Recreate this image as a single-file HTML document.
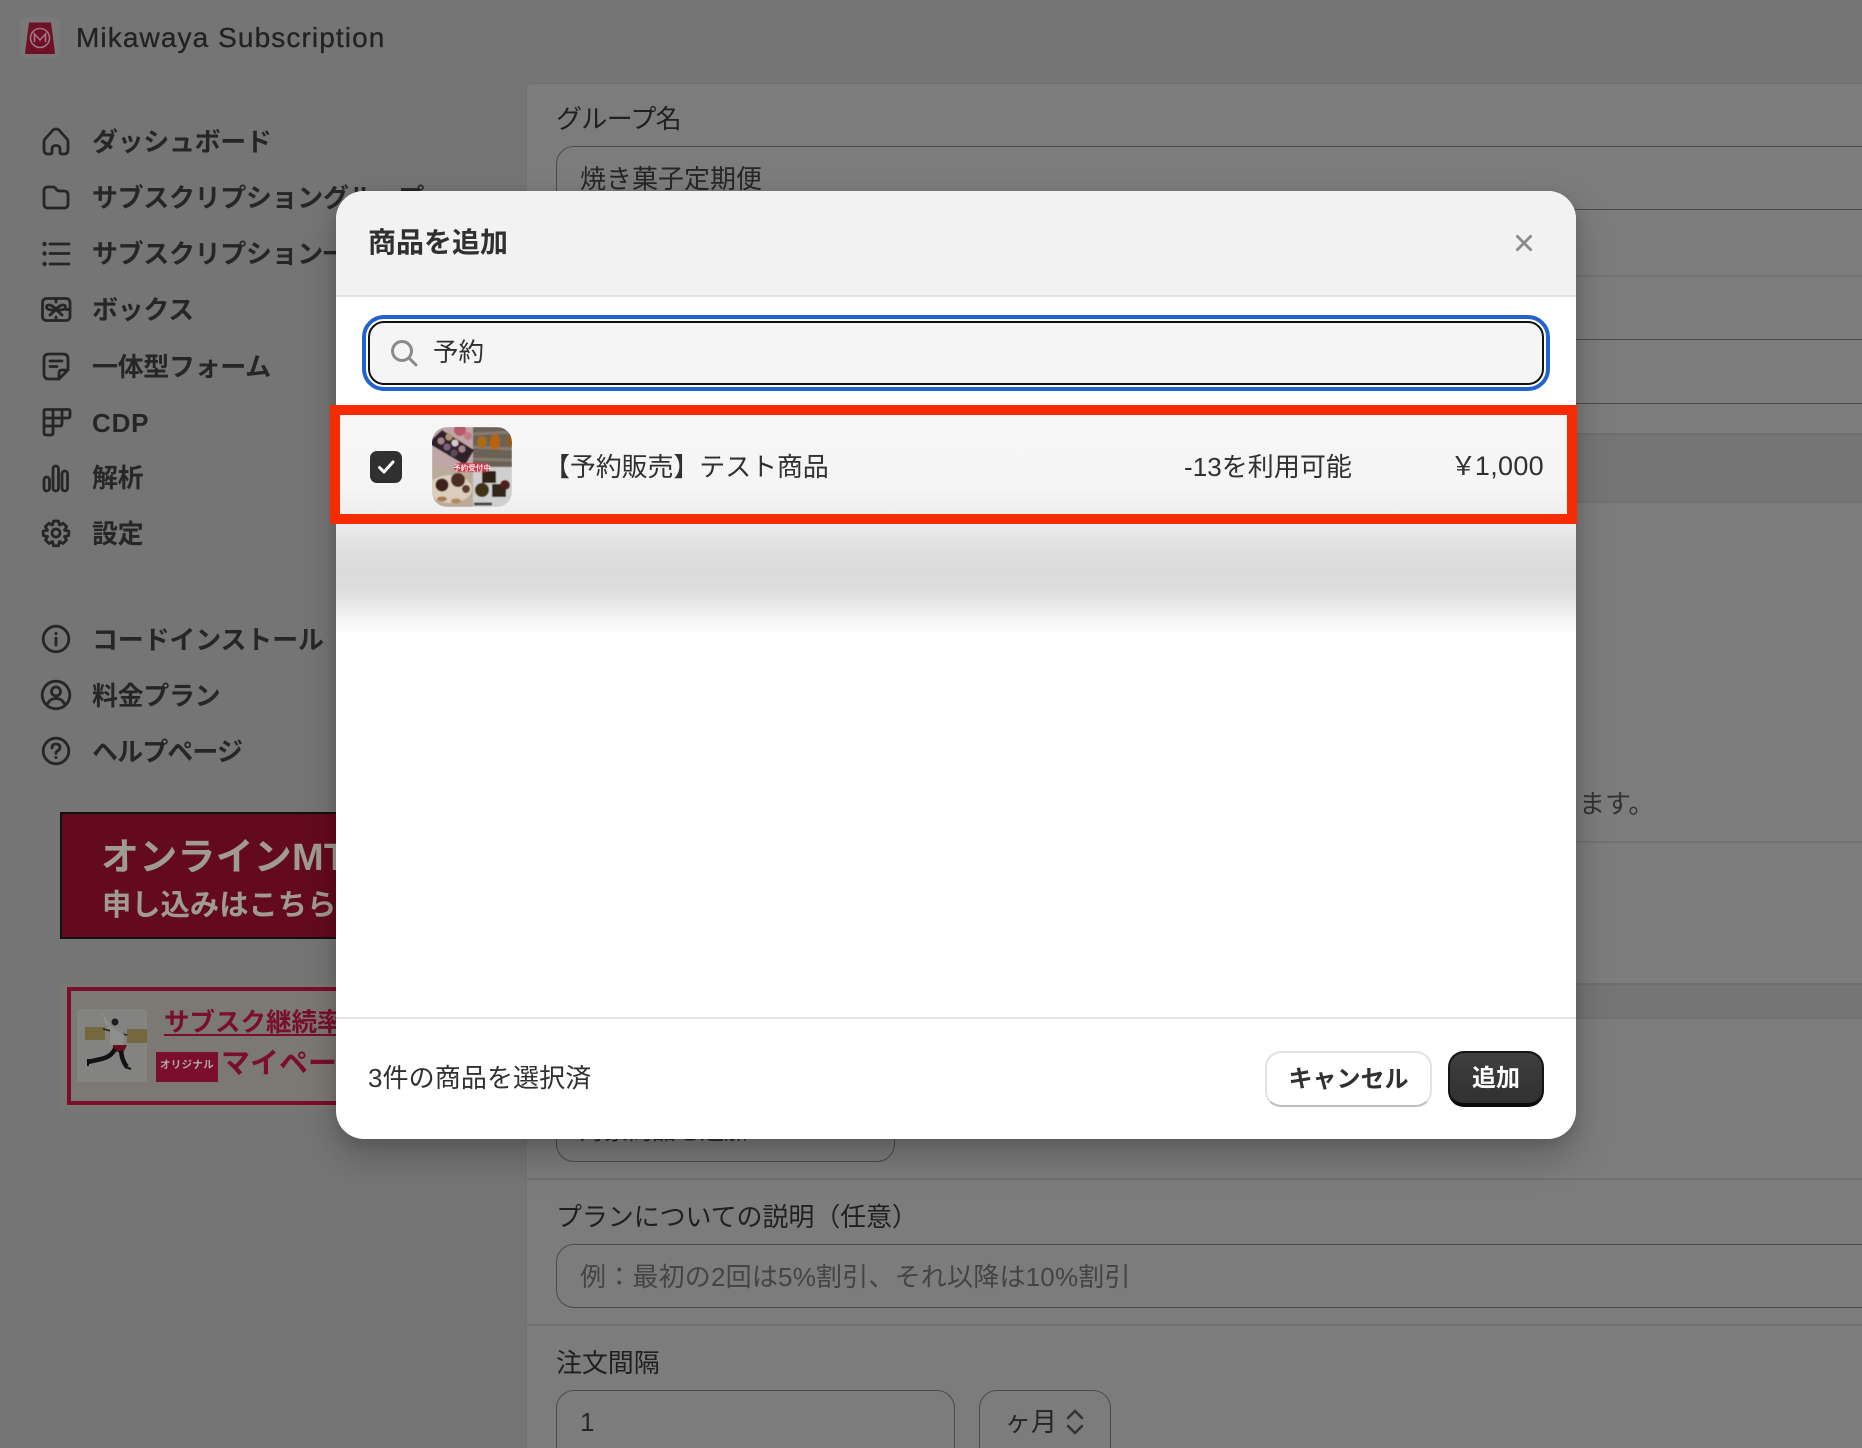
<!DOCTYPE html>
<html lang="ja">
<head>
<meta charset="utf-8">
<title>Mikawaya Subscription</title>
<style>
html,body{margin:0;padding:0;width:1862px;height:1448px;overflow:hidden}
#w{position:relative;width:1862px;height:1448px;overflow:hidden;background:#757575;font-family:"Liberation Sans","Noto Sans CJK JP",sans-serif;color:#202020}
.a{position:absolute}
.t{position:absolute;white-space:nowrap;line-height:1}
.nav{font-size:26px;font-weight:700;color:#262626;left:92px;letter-spacing:-.35px}
.ic{position:absolute;left:42px;width:28px;height:28px;fill:none;stroke:#262626;stroke-width:2.800;stroke-linecap:round;stroke-linejoin:round;overflow:visible}
.lb{font-size:26px;color:#202020;left:556px;letter-spacing:-.7px}
.sf{position:absolute;left:526px;right:0;height:2px;background:#727272}
.inp{position:absolute;box-sizing:border-box;border:1.5px solid #4a4a4a;border-radius:18px}
.card{position:absolute;left:525px;right:0;background:#7c7c7c}
.m{font-size:26px;color:#303030}
</style>
</head>
<body>
<div id="w">
<!-- top bar -->
<div class="a" style="left:20px;top:18px;width:40px;height:40px;background:#797979;border-radius:4px"></div>
<svg class="a" style="left:23px;top:20px" width="34" height="36" viewBox="0 0 34 36">
<path d="M6 2.500H28L32 33Q32 34 30 34H4Q2 34 2 33Z" fill="#701028"/>
<circle cx="17" cy="18" r="9.500" fill="none" stroke="#9e7882" stroke-width="1.600"/>
<path d="M11.500 22V14L17 20L22.500 14V22" fill="none" stroke="#9e7882" stroke-width="1.600"/>
</svg>
<div class="t" style="left:76px;top:24px;font-size:28px;color:#222;letter-spacing:1.1px;-webkit-text-stroke:.3px #222">Mikawaya Subscription</div>

<!-- sidebar -->
<div class="t nav" style="top:129px">ダッシュボード</div>
<div class="t nav" style="top:185px">サブスクリプショングループ</div>
<div class="t nav" style="top:241px">サブスクリプション一覧</div>
<div class="t nav" style="top:297px">ボックス</div>
<div class="t nav" style="top:354px">一体型フォーム</div>
<div class="t nav" style="top:410px;letter-spacing:.8px">CDP</div>
<div class="t nav" style="top:465px">解析</div>
<div class="t nav" style="top:521px">設定</div>
<div class="t nav" style="top:627px;letter-spacing:-.2px">コードインストール</div>
<div class="t nav" style="top:683px">料金プラン</div>
<div class="t nav" style="top:739px;letter-spacing:-.9px">ヘルプページ</div>

<svg class="ic" style="top:127px" viewBox="0 0 28 28"><path d="M3 12L11 3Q14 .8 17 3L25 12Q26 13 26 15V23Q26 27 22 27H19.500Q18 27 18 25V22Q18 18.500 14 18.500Q10 18.500 10 22V25Q10 27 8.500 27H6Q2 27 2 23V15Q2 13 3 12Z"/></svg>
<svg class="ic" style="top:183px" viewBox="0 0 28 28"><path d="M2 8Q2 4 6 4H11Q13 4 14 6L15 7Q16 8 18 8H22Q26 8 26 12V21Q26 25 22 25H6Q2 25 2 21Z"/></svg>
<svg class="ic" style="top:239px" viewBox="0 0 28 28"><path d="M8 5H27M8 14.500H27M8 25H27"/><g fill="#262626" stroke="none"><circle cx="2.500" cy="5" r="2.200"/><circle cx="2.500" cy="14.500" r="2.200"/><circle cx="2.500" cy="25" r="2.200"/></g></svg>
<svg class="ic" style="top:296px" viewBox="0 0 28 28"><rect x="0.500" y="2.500" width="27.500" height="22" rx="4"/><path d="M14 13.500C10 8 4.500 8 4.500 11C4.500 14 10 14.500 14 13.500C18 8 23.500 8 23.500 11C23.500 14 18 14.500 14 13.500ZM14 13.500L8 19M14 13.500L20 19M14 2.500V6M14 21V24.500M24 13.500H28"/></svg>
<svg class="ic" style="top:352px" viewBox="0 0 28 28"><path d="M17 27H7Q2 27 2 22V7Q2 2 7 2H21Q26 2 26 7V18L17 27ZM17 27V21Q17 18 20 18H26M8 9H20M8 14.500H15"/></svg>
<svg class="ic" style="top:408px" viewBox="0 0 28 28"><path d="M2 3Q2 1.500 3.500 1.500H26Q28 1.500 28 3V8Q28 10 26 10H20V15Q20 18 18 18H11V25Q11 27 9 27H4Q2 27 2 25ZM2 10H20M2 18H11M11 1.500V18M20 1.500V10"/></svg>
<svg class="ic" style="top:464px" viewBox="0 0 28 28"><rect x="2" y="13" width="5.500" height="14" rx="2.750"/><rect x="11" y="2" width="5.500" height="25" rx="2.750"/><rect x="20" y="7" width="5.500" height="20" rx="2.750"/></svg>
<svg class="ic" style="top:519px" viewBox="0 0 28 28"><circle cx="14" cy="14" r="4"/><path d="M11.500 2H16.500L17.500 6L21.200 4.200L24.700 7.700L22.500 11.200L26.800 12V16.500L22.500 17.500L24.500 21L21 24.500L17.500 22.400L16.500 26.800H11.500L10.500 22.400L7 24.500L3.500 21L5.500 17.500L1.200 16.500V12L5.500 11.200L3.300 7.700L6.800 4.200L10.500 6Z"/></svg>
<svg class="ic" style="top:625px" viewBox="0 0 28 28"><circle cx="14" cy="14" r="12.800"/><path d="M14 13V20"/><circle cx="14" cy="8.500" r="1.500" fill="#262626" stroke="none"/></svg>
<svg class="ic" style="top:681px" viewBox="0 0 28 28"><circle cx="14" cy="14" r="13.800"/><circle cx="14" cy="10.500" r="4.500"/><path d="M5.500 23Q8 17.500 14 17.500Q20 17.500 22.500 23"/></svg>
<svg class="ic" style="top:737px" viewBox="0 0 28 28"><circle cx="14" cy="14" r="12.800"/><path d="M10 11Q10 7 14 7Q18 7 18 10.500Q18 12.500 16 13.500Q14 14.500 14 16.500"/><circle cx="14" cy="20.500" r="1.500" fill="#262626" stroke="none"/></svg>

<!-- banner 1 -->
<div class="a" style="left:60px;top:812px;width:300px;height:127px;box-sizing:border-box;border:2px solid #111;background:#640a1e"></div>
<div class="t" style="left:101px;top:839px;font-size:38px;font-weight:700;color:#9f9b92;letter-spacing:.2px">オンラインMTG</div>
<div class="t" style="left:102px;top:891px;font-size:29.300px;font-weight:700;color:#9f9b92">申し込みはこちら</div>

<!-- banner 2 -->
<div class="a" style="left:60px;top:983px;width:300px;height:126px;background:#797772"></div>
<div class="a" style="left:67px;top:987px;width:290px;height:118px;box-sizing:border-box;border:4px solid #7a0e2c;background:#7c7974"></div>
<svg class="a" style="left:77px;top:1009px" width="70" height="73" viewBox="0 0 70 73">
<rect width="70" height="73" fill="#838381"/>
<rect x="8" y="18" width="20" height="13" fill="#75683f"/><rect x="50" y="20" width="20" height="14" fill="#75683f"/>
<path d="M26 20L50 26" stroke="#222" stroke-width="1.500"/>
<path d="M25 3Q27 14 33 21L33 36L46 36L47 25L34 18" fill="#8e8e8c"/>
<circle cx="38" cy="13" r="3.500" fill="#1d1d1d"/>
<path d="M36 36H50L46 44L36 42Z" fill="#660d22"/>
<path d="M38 40Q34 48 24 50L11 53M44 42Q45 52 50 58" fill="none" stroke="#111" stroke-width="4.500"/>
<path d="M11 50V57M48 58L54 60" stroke="#111" stroke-width="2"/>
</svg>
<div class="t" style="left:164px;top:1011px;font-size:25.500px;font-weight:700;color:#7a0e2c;text-decoration:underline;text-underline-offset:3px">サブスク継続率を</div>
<div class="a" style="left:156px;top:1052px;width:62px;height:30px;background:#7a0e2c"></div>
<div class="t" style="left:160px;top:1060px;font-size:10.500px;font-weight:700;color:#b0aaa4;letter-spacing:.3px">オリジナル</div>
<div class="t" style="left:221px;top:1050px;font-size:29px;font-weight:700;color:#7a0e2c">マイページ</div>

<!-- main cards -->
<div class="card" style="top:82px;height:352px;border-radius:8px 0 0 0;box-shadow:inset 0 2px 0 #727272,inset 2px 0 0 #737373"></div>
<div class="card" style="top:502px;height:482px;box-shadow:inset 2px 0 0 #737373"></div>
<div class="card" style="top:1018px;height:430px;box-shadow:inset 2px 0 0 #737373"></div>
<div class="a" style="left:526px;right:0;top:433px;height:2px;background:#6f6f6f"></div>
<div class="a" style="left:526px;right:0;top:501px;height:2px;background:#727272"></div>
<div class="a" style="left:526px;right:0;top:983px;height:2px;background:#6f6f6f"></div>
<div class="a" style="left:526px;right:0;top:1017px;height:2px;background:#727272"></div>
<div class="sf" style="top:275px"></div>
<div class="sf" style="top:841px"></div>
<div class="sf" style="top:1178px"></div>
<div class="sf" style="top:1324px"></div>

<div class="t lb" style="top:106px">グループ名</div>
<div class="inp" style="left:556px;top:146px;width:1340px;height:64px"></div>
<div class="t" style="left:580px;top:166px;font-size:26px;color:#262626">焼き菓子定期便</div>
<div class="inp" style="left:556px;top:339px;width:1340px;height:65px"></div>
<div class="t" style="left:1579px;top:791px;font-size:26px;color:#333">ます。</div>

<div class="inp" style="left:556px;top:1100px;width:339px;height:62px"></div>
<div class="t" style="left:580px;top:1120px;font-size:24px;color:#262626">対象商品を追加</div>

<div class="t lb" style="top:1204px;letter-spacing:-.1px">プランについての説明（任意）</div>
<div class="inp" style="left:556px;top:1244px;width:1340px;height:64px"></div>
<div class="t" style="left:580px;top:1264px;font-size:26px;color:#444;letter-spacing:.2px">例：最初の2回は5%割引、それ以降は10%割引</div>
<div class="t lb" style="top:1350px;letter-spacing:-.1px">注文間隔</div>
<div class="inp" style="left:556px;top:1390px;width:399px;height:90px"></div>
<div class="t" style="left:580px;top:1409px;font-size:26px;color:#262626">1</div>
<div class="inp" style="left:979px;top:1390px;width:132px;height:90px"></div>
<div class="t" style="left:1005px;top:1409px;font-size:26px;color:#262626">ヶ月</div>
<svg class="a" style="left:1066px;top:1408px" width="18" height="28" viewBox="0 0 18 28" fill="none" stroke="#333" stroke-width="2.500" stroke-linecap="round" stroke-linejoin="round"><path d="M2 10L9 3L16 10M2 18L9 25L16 18"/></svg>

<!-- modal -->
<div class="a" style="left:336px;top:191px;width:1240px;height:948px;border-radius:28px;background:#fff;overflow:hidden;box-shadow:0 18px 36px rgba(0,0,0,.22),0 4px 14px rgba(0,0,0,.1)">
  <div class="a" style="left:0;top:0;width:1240px;height:104px;background:#f2f2f2"></div>
  <div class="a" style="left:0;top:104px;width:1240px;height:2px;background:#e4e4e4"></div>
  <div class="a" style="left:0;top:333px;width:1240px;height:110px;background:linear-gradient(180deg,#ececec 0,#dfdfdf 22%,#dbdbdb 42%,#dcdcdc 58%,#eeeeee 80%,#fbfbfb 95%,#fff 100%)"></div>
  <div class="a" style="left:0;top:826px;width:1240px;height:2px;background:#e3e3e3"></div>
</div>
<div class="t m" style="left:368px;top:229px;font-size:28px;font-weight:700;color:#303030">商品を追加</div>
<svg class="a" style="left:1515px;top:234px" width="18" height="18" viewBox="0 0 18 18" fill="none" stroke="#8a8a8a" stroke-width="2.800" stroke-linecap="square"><path d="M2.500 2.500L15.500 15.500M15.500 2.500L2.500 15.500"/></svg>

<div class="a" style="left:362px;top:315px;width:1188px;height:76px;box-sizing:border-box;border:4.500px solid #2463c9;border-radius:22px;background:#fff"></div>
<div class="a" style="left:368px;top:321px;width:1176px;height:64px;box-sizing:border-box;border:2px solid #111;border-radius:16px;background:#f5f5f5"></div>
<svg class="a" style="left:390px;top:339px" width="28" height="28" viewBox="0 0 28 28" fill="none" stroke="#8a8a8a" stroke-width="3" stroke-linecap="round"><circle cx="12" cy="12" r="9.500"/><path d="M19 19L26 26"/></svg>
<div class="t m" style="left:433px;top:341px;font-size:25.500px">予約</div>

<div class="a" style="left:330px;top:405px;width:1247px;height:119px;box-sizing:border-box;border:10px solid #f72a00;background:linear-gradient(180deg,#f6f6f6 0,#f5f5f5 70%,#eeeeee 100%)"></div>
<div class="a" style="left:370px;top:451px;width:32px;height:32px;border-radius:7px;background:#303030"></div>
<svg class="a" style="left:370px;top:451px" width="32" height="32" viewBox="0 0 32 32" fill="none" stroke="#fff" stroke-width="3" stroke-linecap="round" stroke-linejoin="round"><path d="M9.500 16.500L14 21L23 11"/></svg>

<svg class="a" style="left:432px;top:427px;border-radius:15px" width="80" height="80" viewBox="0 0 80 80">
<defs><clipPath id="c"><rect width="80" height="80" rx="15"/></clipPath><filter id="b"><feGaussianBlur stdDeviation=".5"/></filter></defs>
<g clip-path="url(#c)"><g filter="url(#b)">
<rect width="41" height="40" fill="#c0a6a8"/>
<rect x="41" width="39" height="40" fill="#6b6256"/>
<path d="M41 7L80 5M41 20L80 22M41 32L80 33" stroke="#857c6e" stroke-width="3"/>
<rect y="40" width="41" height="40" fill="#b9aa9a"/>
<rect x="41" y="40" width="39" height="40" fill="#cfcfcf"/>
<circle cx="28" cy="3" r="6" fill="#b95a68"/><circle cx="36" cy="9" r="4" fill="#c47a84"/>
<path d="M-4 16L10 3L42 23L33 38Z" fill="#2f2229"/>
<g fill="#a78389"><circle cx="9" cy="14" r="3.500"/><circle cx="17" cy="10" r="3.500" fill="#b6926f"/><circle cx="15" cy="20" r="3.500" fill="#7d6180"/><circle cx="23" cy="16" r="3.500" fill="#d6c8ca"/><circle cx="22" cy="26" r="3.500" fill="#61495c"/><circle cx="30" cy="22" r="3.500"/></g>
<ellipse cx="50" cy="15" rx="5" ry="6" fill="#a86d16"/><ellipse cx="63" cy="15" rx="5" ry="8" fill="#bb6210"/><ellipse cx="78" cy="14" rx="3" ry="6" fill="#945d15"/>
<ellipse cx="18" cy="62" rx="22" ry="14" fill="#dccdbc"/>
<circle cx="10" cy="58" r="6.500" fill="#3e241b"/><circle cx="26" cy="53" r="7" fill="#4c2e22"/><circle cx="34" cy="62" r="4" fill="#5b3a2b"/><ellipse cx="10" cy="72" rx="5" ry="2.500" fill="#a87a52"/><ellipse cx="24" cy="74" rx="5" ry="2.500" fill="#b38961"/>
<rect x="50" y="44" width="14" height="12" fill="#2d2319"/><rect x="60" y="57" width="14" height="13" fill="#33271a"/><circle cx="50" cy="63" r="7" fill="#3f3215"/><circle cx="73" cy="58" r="5" fill="#521a1e"/><path d="M42 77H60" stroke="#444" stroke-width="3"/>
<rect x="22" y="36" width="36" height="9" rx="4.500" fill="#c93644"/>
</g></g>
<text x="40" y="43.500" text-anchor="middle" font-size="7.500" font-weight="700" fill="#f4e6e6" font-family="'Liberation Sans','Noto Sans CJK JP',sans-serif">予約受付中</text>
</svg>

<div class="t m" style="left:544px;top:454px;font-size:26px;letter-spacing:-.12px">【予約販売】テスト商品</div>
<div class="t m" style="left:1184px;top:454px;font-size:26px;letter-spacing:.05px">-13を利用可能</div>
<div class="t m" style="right:318px;top:453px;font-size:27px;letter-spacing:.3px"><span style="font-size:26px;letter-spacing:-1.5px">￥</span>1,000</div>

<div class="t m" style="left:368px;top:1065px;font-size:26px;letter-spacing:.1px">3件の商品を選択済</div>
<div class="a" style="left:1265px;top:1051px;width:167px;height:56px;box-sizing:border-box;border:2px solid #e2e2e2;border-bottom:2px solid #bdbdbd;border-radius:16px;background:#fff;text-align:center;line-height:54px;font-size:24px;font-weight:700;color:#303030">キャンセル</div>
<div class="a" style="left:1448px;top:1051px;width:96px;height:56px;box-sizing:border-box;border-radius:16px;background:linear-gradient(180deg,#3f3f3f,#333 80%);border:2px solid #161616;border-bottom:4px solid #0a0a0a;text-align:center;line-height:52px;font-size:24px;font-weight:700;color:#fff">追加</div>
</div>
</body>
</html>
